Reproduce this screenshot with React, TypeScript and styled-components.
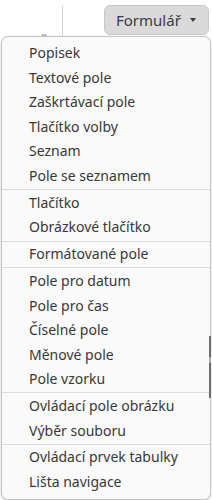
import React from "react";
import styled, { createGlobalStyle } from "styled-components";

const GlobalStyle = createGlobalStyle`
  html, body { margin: 0; padding: 0; background: #ffffff; }
  body { font-family: "Noto Sans", "Open Sans", sans-serif; }
  * { box-sizing: border-box; }
`;

const Screen = styled.div`
  position: relative;
  width: 212px;
  height: 500px;
  overflow: hidden;
  background: #ffffff;
`;

const Toolbar = styled.div`
  display: flex;
  align-items: flex-start;
  padding-top: 5px;
  height: 41px;
`;

const LeftArea = styled.div`
  display: flex;
  align-items: flex-start;
  width: 104px;
  height: 36px;
`;

const Overflow = styled.span`
  margin-left: 41px;
  margin-top: 22.5px;
  width: 21px;
  font-size: 13px;
  line-height: 14px;
  color: #777777;
`;

const Divider = styled.div`
  width: 1px;
  height: 31px;
  background: #d8d8d8;
`;

const DropButton = styled.div`
  display: flex;
  align-items: center;
  width: 105px;
  height: 30px;
  padding-left: 11px;
  border: 1px solid #c8c8c8;
  border-radius: 6px;
  background: #dadada;
  color: #3c3c3c;
  font-size: 15px;
`;

const ButtonLabel = styled.span`
  flex: 1;
`;

const Caret = styled.span`
  width: 0;
  height: 0;
  margin-right: 12px;
  border-left: 3.5px solid transparent;
  border-right: 3.5px solid transparent;
  border-top: 4px solid #3c3c3c;
`;

const Menu = styled.ul`
  position: absolute;
  top: 36px;
  left: 1px;
  width: 210px;
  margin: 0;
  padding: 4px 0;
  list-style: none;
  background: #fafafa;
  border: 1px solid #c4c4c4;
  border-radius: 7px;
  box-shadow: 0 1px 3px rgba(0, 0, 0, 0.18);
`;

const Item = styled.li`
  height: 24.6px;
  line-height: 24.6px;
  padding-left: 27px;
  font-size: 14px;
  color: #383838;
  white-space: nowrap;
`;

const Separator = styled.li`
  height: 1px;
  margin: 0.6px 0;
  background: #dcdcdc;
`;

const ScrollEdge = styled.div`
  position: absolute;
  left: 209px;
  top: 336px;
  width: 2px;
  height: 62px;
  background: linear-gradient(
    to bottom,
    #6e6e6e 0px,
    #6e6e6e 21px,
    #a8a8a8 21px,
    #a8a8a8 27px,
    #6e6e6e 27px
  );
`;

const groups: string[][] = [
  ["Popisek", "Textové pole", "Zaškrtávací pole", "Tlačítko volby", "Seznam", "Pole se seznamem"],
  ["Tlačítko", "Obrázkové tlačítko"],
  ["Formátované pole"],
  ["Pole pro datum", "Pole pro čas", "Číselné pole", "Měnové pole", "Pole vzorku"],
  ["Ovládací pole obrázku", "Výběr souboru"],
  ["Ovládací prvek tabulky", "Lišta navigace"],
];

export default function App() {
  return (
    <>
      <GlobalStyle />
      <Screen>
        <Toolbar>
          <LeftArea>
            <Overflow>»</Overflow>
            <Divider />
          </LeftArea>
          <DropButton>
            <ButtonLabel>Formulář</ButtonLabel>
            <Caret />
          </DropButton>
        </Toolbar>
        <Menu>
          {groups.map((g, gi) => (
            <React.Fragment key={gi}>
              {gi > 0 && <Separator />}
              {g.map((label) => (
                <Item key={label}>{label}</Item>
              ))}
            </React.Fragment>
          ))}
        </Menu>
        <ScrollEdge />
      </Screen>
    </>
  );
}
